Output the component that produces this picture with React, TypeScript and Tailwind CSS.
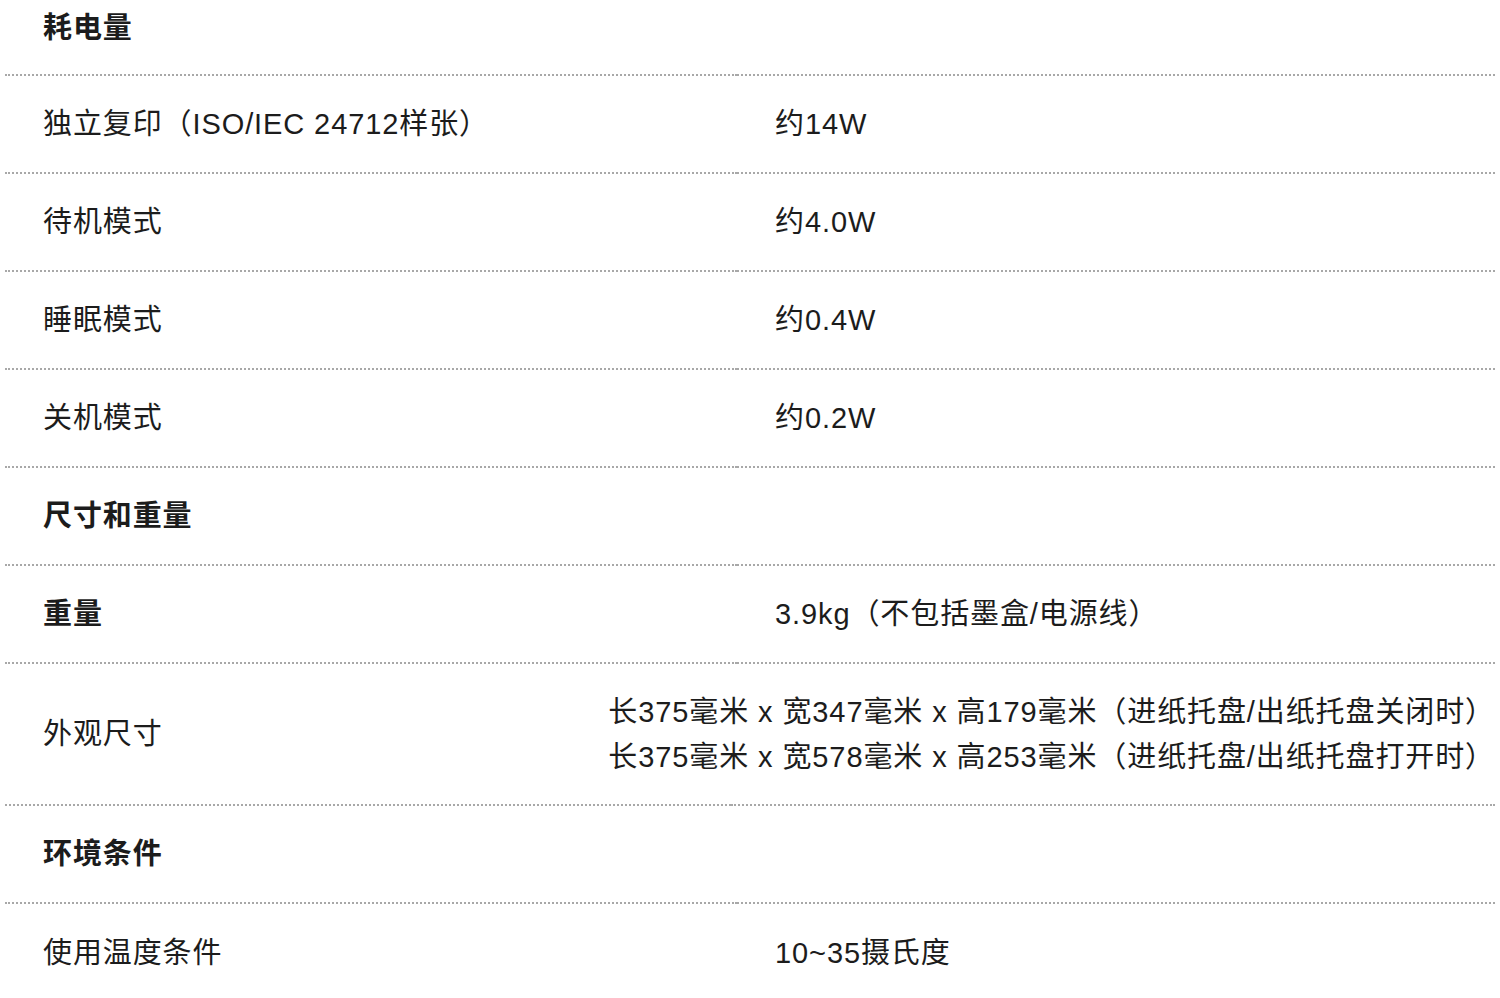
import React from 'react'

type Row = {
  label: string
  value?: string[]
  bold?: boolean
  wide?: boolean
}

const rows: Row[] = [
  { label: '独立复印（ISO/IEC 24712样张）', value: ['约14W'] },
  { label: '待机模式', value: ['约4.0W'] },
  { label: '睡眠模式', value: ['约0.4W'] },
  { label: '关机模式', value: ['约0.2W'] },
  { label: '尺寸和重量', bold: true },
  { label: '重量', bold: true, value: ['3.9kg（不包括墨盒/电源线）'] },
  {
    label: '外观尺寸',
    wide: true,
    value: [
      '长375毫米 x 宽347毫米 x 高179毫米（进纸托盘/出纸托盘关闭时）',
      '长375毫米 x 宽578毫米 x 高253毫米（进纸托盘/出纸托盘打开时）',
    ],
  },
  { label: '环境条件', bold: true },
]

const font = { fontFamily: '"Liberation Sans", "Noto Sans CJK SC", sans-serif' }

function SpecRow({ label, value, bold, wide }: Row) {
  return (
    <div className={`flex ${wide ? 'h-[142px]' : 'h-[98px]'}`}>
      <div className="w-[732px] flex items-center pl-[38px] border-b-2 border-dotted border-[#a8a8a8]">
        <span className={bold ? 'font-bold' : ''}>{label}</span>
      </div>
      <div className="flex-1 flex items-center pl-[38px] border-b-2 border-dotted border-[#a8a8a8]">
        {value && (
          <div className={`flex flex-col gap-[9px] whitespace-nowrap ${wide ? '-ml-[161px]' : ''}`}>
            {value.map(v => (
              <span key={v}>{v}</span>
            ))}
          </div>
        )}
      </div>
    </div>
  )
}

export default function App() {
  return (
    <div className="w-[1500px] h-[998px] overflow-hidden bg-white text-[#1c1c1c] text-[29px] leading-[36px] tracking-[0.9px]" style={font}>
      <div className="mx-[5px] flex flex-col">
        <div className="flex h-[76px]">
          <div className="w-[732px] flex items-start pt-[10px] pl-[38px] border-b-2 border-dotted border-[#a8a8a8]">
            <span className="font-bold">耗电量</span>
          </div>
          <div className="flex-1 border-b-2 border-dotted border-[#a8a8a8]" />
        </div>
        {rows.map(r => (
          <SpecRow key={r.label} {...r} />
        ))}
        <div className="flex h-[98px]">
          <div className="w-[732px] flex items-center pl-[38px]">
            <span>使用温度条件</span>
          </div>
          <div className="flex-1 flex items-center pl-[38px]">
            <span>10~35摄氏度</span>
          </div>
        </div>
      </div>
    </div>
  )
}
